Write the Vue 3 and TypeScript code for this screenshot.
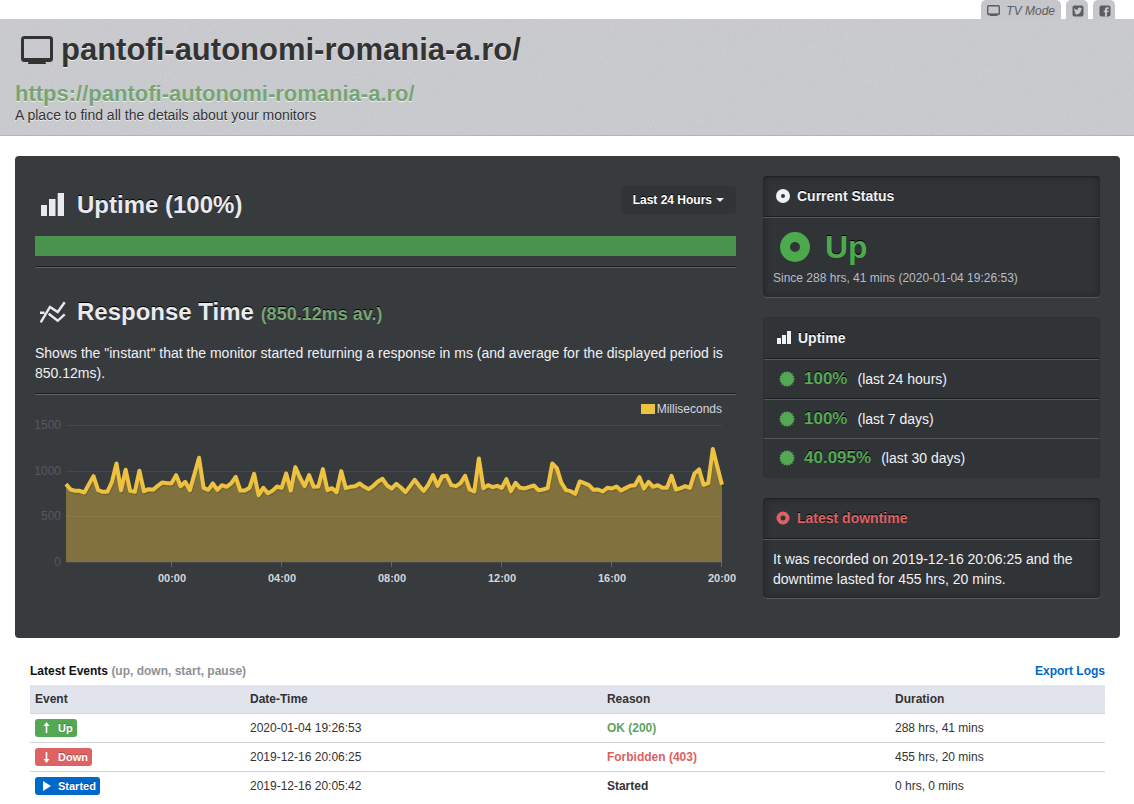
<script setup lang="ts">
interface EventRow {
  kind: 'up' | 'down' | 'started'
  label: string
  date: string
  reason: string
  duration: string
}

const events: EventRow[] = [
  { kind: 'up', label: 'Up', date: '2020-01-04 19:26:53', reason: 'OK (200)', duration: '288 hrs, 41 mins' },
  { kind: 'down', label: 'Down', date: '2019-12-16 20:06:25', reason: 'Forbidden (403)', duration: '455 hrs, 20 mins' },
  { kind: 'started', label: 'Started', date: '2019-12-16 20:05:42', reason: 'Started', duration: '0 hrs, 0 mins' },
]

const ratios = [
  { value: '100%', period: '(last 24 hours)' },
  { value: '100%', period: '(last 7 days)' },
  { value: '40.095%', period: '(last 30 days)' },
]

// One response-time sample per ten minutes; 410 steps equal 1500 ms.
const FULL_SCALE = 410
const samples: number[] = [
  233, 217, 213, 213, 208, 233, 257, 215, 210, 210, 239, 295, 215, 276, 213, 210,
  273, 212, 218, 216, 228, 238, 236, 236, 260, 227, 240, 215, 263, 312, 222, 216,
  235, 216, 230, 225, 235, 255, 214, 214, 222, 264, 200, 222, 206, 213, 226, 222,
  265, 214, 284, 253, 227, 260, 225, 226, 278, 215, 221, 209, 272, 221, 225, 227,
  235, 225, 218, 228, 241, 249, 229, 220, 234, 223, 209, 227, 246, 228, 213, 232,
  260, 228, 256, 258, 230, 227, 236, 258, 217, 211, 310, 221, 230, 224, 228, 222,
  248, 212, 237, 222, 220, 225, 229, 215, 217, 221, 295, 281, 237, 215, 212, 204,
  241, 236, 230, 216, 217, 211, 222, 220, 226, 214, 221, 228, 230, 254, 220, 240,
  225, 230, 222, 222, 258, 217, 221, 227, 222, 265, 277, 231, 236, 338, 284, 231,
]

const plot = { left: 31, right: 687, top: 30, bottom: 167 }
const points = samples.map((s, i) => {
  const x = plot.left + (i * (plot.right - plot.left)) / (samples.length - 1)
  const y = plot.bottom - (s * (plot.bottom - plot.top)) / FULL_SCALE
  return `${x.toFixed(2)},${y.toFixed(2)}`
})
const line = points.join(' ')
const area = `${plot.left},${plot.bottom} ${line} ${plot.right},${plot.bottom}`

const yTicks = [
  { label: '1500', y: 30 },
  { label: '1000', y: 76 },
  { label: '500', y: 121 },
  { label: '0', y: 167 },
]
const xTicks = [
  { label: '00:00', x: 137 },
  { label: '04:00', x: 247 },
  { label: '08:00', x: 357 },
  { label: '12:00', x: 467 },
  { label: '16:00', x: 577 },
  { label: '20:00', x: 687 },
]

const TEETH = 16
const burst = Array.from({ length: TEETH * 2 }, (_, i) => {
  const r = i % 2 ? 6.5 : 8
  const a = (i * Math.PI) / TEETH
  return `${(8 + r * Math.sin(a)).toFixed(2)},${(8 - r * Math.cos(a)).toFixed(2)}`
}).join(' ')
</script>

<template>
  <div class="page">
    <nav class="tabs">
      <a href="#tv" class="tab tv">
        <svg width="14" height="12" viewBox="0 0 14 12" aria-hidden="true">
          <rect x="0.7" y="0.7" width="11.600" height="8.800" rx="1" fill="none" stroke="currentColor" stroke-width="1.4" />
          <path d="M1 8.500h11v1H1zM3.500 9.500h6l1 1.500h-8z" fill="currentColor" />
        </svg>
        TV Mode
      </a>
      <a href="#twitter" class="tab" aria-label="Twitter">
        <svg width="12" height="12" viewBox="0 0 12 12" aria-hidden="true">
          <rect x="0.5" y="0.5" width="11" height="11" rx="2" fill="currentColor" />
          <path d="M2.3 3.2c1 1.1 2 1.6 3.4 1.6C5.600 3.300 6.600 2.500 7.600 2.600c.5 0 .9.2 1.200.5l1.100-.4-.6 1 .7-.1-.8.9C9.100 7.500 7.200 9.400 4.700 9.400c-.9 0-1.800-.2-2.500-.7.9 0 1.500-.2 2-.6-.8-.1-1.200-.5-1.400-1h.7c-.8-.3-1.200-.8-1.200-1.500l.6.100c-.7-.6-.9-1.500-.6-2.500z" fill="#c8c9cd" />
        </svg>
      </a>
      <a href="#facebook" class="tab" aria-label="Facebook">
        <svg width="12" height="12" viewBox="0 0 12 12" aria-hidden="true">
          <rect x="0.5" y="0.5" width="11" height="11" rx="2" fill="currentColor" />
          <path d="M6 11.500V7.200H4.700V5.500H6V4.400C6 2.900 6.900 2.200 8.200 2.200h1.500v1.700H8.600c-.6 0-.7.3-.7.7v.9h1.800l-.2 1.700H7.900v4.300z" fill="#c8c9cd" />
        </svg>
      </a>
    </nav>

    <header class="masthead">
      <svg class="grain" aria-hidden="true">
        <filter id="grain">
          <feTurbulence type="fractalNoise" baseFrequency="0.6" numOctaves="2" />
          <feColorMatrix values="0 0 0 0 0.4  0 0 0 0 0.4  0 0 0 0 0.43  0.35 0 0 0 -0.11" />
        </filter>
        <rect width="100%" height="100%" filter="url(#grain)" />
      </svg>
      <div class="masthead-text">
        <h1>
          <svg width="33" height="29" viewBox="0 0 33 29" aria-hidden="true">
            <rect x="1.500" y="1.500" width="29" height="23" rx="2" fill="none" stroke="currentColor" stroke-width="3" />
            <path d="M3 22h26v3H3zM9 25h14l2 2v1H7v-1z" fill="currentColor" />
          </svg>
          pantofi-autonomi-romania-a.ro/
        </h1>
        <a class="site" href="https://pantofi-autonomi-romania-a.ro/">https://pantofi-autonomi-romania-a.ro/</a>
        <p>A place to find all the details about your monitors</p>
      </div>
    </header>

    <main>
      <div class="panel">
        <section class="charts">
          <div class="title-row">
            <h2>
              <svg width="26" height="24" viewBox="0 0 26 24" aria-hidden="true">
                <path d="M1 12h6v11H1zM9 6h6.500v17H9zM17.700 0h6.300v23h-6.300z" fill="currentColor" />
              </svg>
              Uptime (100%)
            </h2>
            <button type="button" class="range">Last 24 Hours<span class="caret"></span></button>
          </div>
          <div class="uptime-bar"></div>
          <hr />
          <h2 class="response">
            <svg width="26" height="24" viewBox="0 0 26 24" aria-hidden="true">
              <path d="M.7 22.500 10 7l7.700 5L24.700 2.300M0 12.800h4.500M8.700 13.800l9 7 7-6.500" fill="none" stroke="currentColor" stroke-width="2.400" />
            </svg>
            <span>Response Time <small>(850.12ms av.)</small></span>
          </h2>
          <p>Shows the "instant" that the monitor started returning a response in ms (and average for the displayed period is 850.12ms).</p>
          <hr />
          <svg class="chart" viewBox="0 0 701 203" role="img" aria-label="Response time in milliseconds">
            <g v-for="t in yTicks" :key="t.label">
              <line :x1="plot.left" :x2="plot.right" :y1="t.y + 0.5" :y2="t.y + 0.5" stroke="#45484b" />
              <text class="ylab" x="26" :y="t.y + 4" text-anchor="end">{{ t.label }}</text>
            </g>
            <polygon :points="area" fill="#edc240" fill-opacity="0.4" />
            <polyline :points="line" transform="translate(1 2)" fill="none" stroke="#000" stroke-opacity="0.12" stroke-width="3" stroke-linejoin="round" />
            <polyline :points="line" fill="none" stroke="#edc240" stroke-width="4" stroke-linejoin="round" />
            <g v-for="t in xTicks" :key="t.label">
              <line :x1="t.x - 0.5" :x2="t.x - 0.5" y1="167" y2="172" stroke="#6f6746" />
              <text class="xlab" :x="t.x" y="187" text-anchor="middle">{{ t.label }}</text>
            </g>
            <rect x="606" y="9" width="14" height="10" fill="#edc240" />
            <text class="legend" x="687" y="18" text-anchor="end">Milliseconds</text>
          </svg>
        </section>

        <aside>
          <section class="card inset">
            <h3>
              <svg width="14" height="14" viewBox="0 0 14 14" aria-hidden="true">
                <circle cx="7" cy="7" r="4.500" fill="none" stroke="currentColor" stroke-width="5" />
              </svg>
              Current Status
            </h3>
            <div class="body status">
              <div class="state">
                <svg width="30" height="30" viewBox="0 0 30 30" aria-hidden="true">
                  <circle cx="15" cy="15" r="10" fill="none" stroke="currentColor" stroke-width="10" />
                </svg>
                Up
              </div>
              <div class="since">Since 288 hrs, 41 mins (2020-01-04 19:26:53)</div>
            </div>
          </section>

          <section class="card">
            <h3>
              <svg width="14" height="14" viewBox="0 0 14 14" aria-hidden="true">
                <path d="M0 7h4v6H0zM5 4h4v9H5zM10 0h4v13h-4z" fill="currentColor" />
              </svg>
              Uptime
            </h3>
            <ul>
              <li v-for="r in ratios" :key="r.period">
                <svg width="16" height="16" viewBox="0 0 16 16" aria-hidden="true">
                  <polygon :points="burst" fill="currentColor" />
                </svg>
                <strong>{{ r.value }}</strong>
                <span>{{ r.period }}</span>
              </li>
            </ul>
          </section>

          <section class="card inset">
            <h3 class="bad">
              <svg width="14" height="14" viewBox="0 0 14 14" aria-hidden="true">
                <circle cx="7" cy="7" r="4.500" fill="none" stroke="currentColor" stroke-width="4" />
              </svg>
              Latest downtime
            </h3>
            <div class="body">It was recorded on 2019-12-16 20:06:25 and the downtime lasted for 455 hrs, 20 mins.</div>
          </section>
        </aside>
      </div>

      <section class="events">
        <div class="events-head">
          <h4>Latest Events <span>(up, down, start, pause)</span></h4>
          <a href="#export">Export Logs</a>
        </div>
        <table>
          <thead>
            <tr>
              <th class="c-event">Event</th>
              <th class="c-date">Date-Time</th>
              <th class="c-reason">Reason</th>
              <th>Duration</th>
            </tr>
          </thead>
          <tbody>
            <tr v-for="e in events" :key="e.kind">
              <td>
                <span class="badge" :class="e.kind">
                  <svg width="11" height="12" viewBox="0 0 11 12" aria-hidden="true">
                    <path v-if="e.kind === 'up'" d="M5.500 0 8.500 4H6.300v7H4.700V4H2.500z" fill="currentColor" />
                    <path v-else-if="e.kind === 'down'" d="M5.500 12 8.500 8H6.300V1H4.700v7H2.500z" fill="currentColor" />
                    <path v-else d="M2 1 10 6 2 11z" fill="currentColor" />
                  </svg>
                  {{ e.label }}
                </span>
              </td>
              <td>{{ e.date }}</td>
              <td class="reason" :class="e.kind">{{ e.reason }}</td>
              <td>{{ e.duration }}</td>
            </tr>
          </tbody>
        </table>
      </section>
    </main>
  </div>
</template>

<style>
body {
  margin: 0;
  background: #fff;
}
</style>

<style scoped>
.page {
  font: 14px/20px "Liberation Sans", Arial, sans-serif;
  color: #333;
}
h1, h2, h3, h4, p, ul {
  margin: 0;
  padding: 0;
}
a {
  text-decoration: none;
}
svg {
  display: block;
  flex: none;
}
.tabs {
  display: flex;
  justify-content: flex-end;
  gap: 5px;
  height: 19px;
  padding-right: 19px;
}
.tab {
  display: flex;
  align-items: center;
  gap: 5px;
  padding: 2px 4px 0 6px;
  background: #c6c7cb;
  border-radius: 5px 5px 0 0;
  color: #5c5d5e;
  font-size: 12px;
  font-style: italic;
}
.tab.tv {
  padding: 2px 6px 0;
}
.masthead {
  position: relative;
  background: #cbccd0;
  border-bottom: 1px solid #b4b5bc;
}
.grain {
  position: absolute;
  inset: 0;
  width: 100%;
  height: 100%;
}
.masthead-text {
  position: relative;
  padding: 11px 15px 10px;
  text-shadow: 0 1px 0 rgba(255, 255, 255, 0.7);
}
h1 {
  display: flex;
  align-items: center;
  gap: 7px;
  padding-left: 6px;
  font-size: 31px;
  line-height: 40px;
}
.site {
  display: block;
  margin-top: 13px;
  font-size: 22px;
  line-height: 22px;
  font-weight: bold;
  color: #76a474;
}
main {
  padding: 20px 14px 0 15px;
}
.panel {
  display: grid;
  grid-template-columns: minmax(0, 701fr) minmax(0, 337fr);
  gap: 27px;
  padding: 20px 20px 40px;
  background: #383b3e;
  border-radius: 4px;
  color: #f0f1f5;
}
.title-row {
  display: flex;
  justify-content: space-between;
  align-items: flex-start;
  padding-top: 10px;
  height: 50px;
}
h2 {
  display: flex;
  align-items: center;
  gap: 11px;
  padding-left: 5px;
  padding-top: 4px;
  font-size: 24px;
  line-height: 30px;
  color: #e8eaef;
  text-shadow: 0 -1px 0 #000;
}
h2.response {
  padding-top: 29px;
}
h2 small {
  font-size: 18px;
  line-height: 20px;
  color: #76a474;
}
.range {
  display: flex;
  align-items: center;
  gap: 4px;
  margin: 0;
  padding: 4px 12px;
  border: 0;
  border-radius: 4px;
  background: #313437;
  color: #fff;
  font: bold 12px/20px "Liberation Sans", Arial, sans-serif;
  text-shadow: 0 -1px 0 #000;
}
.caret {
  border: 4px solid transparent;
  border-top-color: #e8eaef;
  border-bottom: 0;
}
.uptime-bar {
  height: 20px;
  background: #4a934c;
}
hr {
  height: 1px;
  margin: 10px 0 0;
  border: 0;
  border-top: 1px solid #1d1e20;
  background: #5e6062;
}
.charts p {
  padding-top: 16px;
}
.chart {
  width: 100%;
  height: auto;
  font-family: "Liberation Sans", Arial, sans-serif;
}
.ylab {
  font-size: 12px;
  fill: #56595b;
}
.xlab {
  font-size: 11px;
  font-weight: bold;
  fill: #d5d7da;
}
.legend {
  font-size: 12px;
  fill: #d5d7e0;
}
aside {
  display: flex;
  flex-direction: column;
  gap: 20px;
}
.card {
  background: #313437;
  border-radius: 4px;
  border: 1px solid #2e3134;
}
.card.inset {
  border: 0;
  box-shadow: inset 0 0 8px rgba(0, 0, 0, 0.3), inset 0 1px 2px rgba(0, 0, 0, 0.3), 0 1px 0 #56585b;
}
h3 {
  display: flex;
  align-items: center;
  gap: 7px;
  padding: 10px 13px;
  border-bottom: 1px solid #1d1e20;
  font-size: 14px;
  line-height: 20px;
  text-shadow: 0 -1px 0 #000;
}
.bad {
  color: #de6262;
}
.body {
  padding: 9px 10px;
  border-top: 1px solid #56585b;
}
.status {
  padding: 10px 10px 9px;
}
.state {
  display: flex;
  align-items: center;
  gap: 15px;
  padding-left: 7px;
  font-size: 32px;
  line-height: 38px;
  font-weight: bold;
  color: #4caa4d;
  text-shadow: 0 -1px 0 #000;
}
.since {
  padding-top: 2px;
  font-size: 12px;
  color: #b9bcc6;
}
ul {
  list-style: none;
}
li {
  display: flex;
  align-items: center;
  padding: 9px 15px;
  border-top: 1px solid #56585b;
  line-height: 20px;
}
li:first-child {
  border-bottom: 1px solid #1d1e20;
}
li svg {
  color: #54a854;
}
li strong {
  padding: 0 10px 0 9px;
  font-size: 17px;
  color: #54a854;
  text-shadow: 0 -1px 0 #000;
}
.events {
  padding: 23px 15px 0;
  font-size: 12px;
}
.events-head {
  display: flex;
  justify-content: space-between;
  padding-bottom: 4px;
  font-weight: bold;
}
h4 {
  font-size: 12px;
  color: #111;
}
h4 span {
  color: #8e9194;
}
.events-head a {
  color: #0068c9;
}
table {
  width: 100%;
  border-collapse: collapse;
  table-layout: fixed;
}
th, td {
  height: 20px;
  padding: 4px 5px;
  border-bottom: 1px solid #d3d4d6;
  text-align: left;
  line-height: 20px;
}
tbody tr:last-child td {
  border-bottom: 0;
}
th {
  background: #e1e4ec;
}
.c-event {
  width: 20%;
  box-sizing: border-box;
}
.c-date {
  width: 33.2%;
  box-sizing: border-box;
}
.c-reason {
  width: 26.8%;
  box-sizing: border-box;
}
.badge {
  display: inline-flex;
  align-items: center;
  gap: 6px;
  margin-top: 1px;
  padding: 0 4px 0 6px;
  border-radius: 3px;
  color: #fff;
  font-size: 11px;
  line-height: 18px;
  font-weight: bold;
  vertical-align: top;
  text-shadow: 0 -1px 0 rgba(0, 0, 0, 0.25);
}
.badge.up {
  background: #54a854;
}
.badge.down {
  background: #de6262;
}
.badge.started {
  background: #0068c9;
}
.reason {
  font-weight: bold;
}
.reason.up {
  color: #5fa35d;
}
.reason.down {
  color: #da6262;
}
</style>
